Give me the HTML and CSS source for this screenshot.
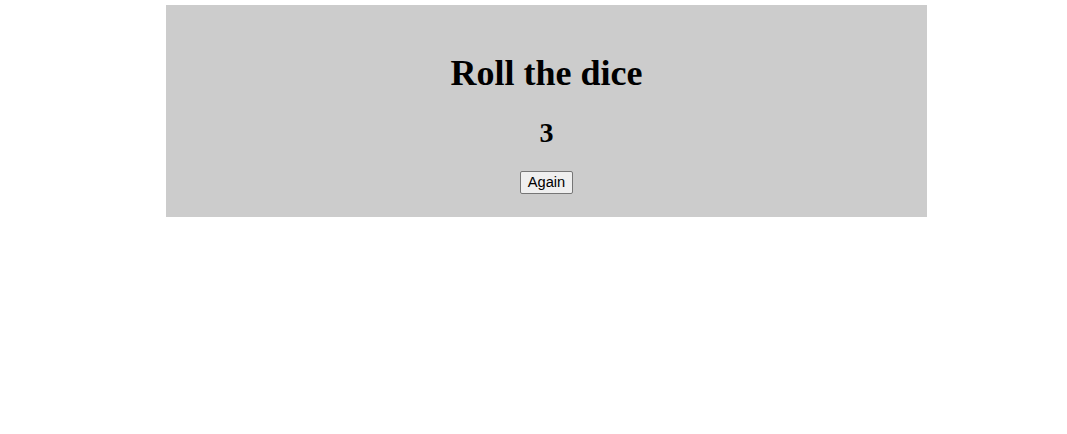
FILE: index.html
```html
<!DOCTYPE html>
<html>
<head>
<meta charset="utf-8">
<link rel="stylesheet" href="styles.css">
</head>
<body>
<div class="panel">
  <h1 class="title">Roll the dice</h1>
  <h2 class="result">3</h2>
  <button class="again">Again</button>
</div>
</body>
</html>
```
FILE: styles.css
```css
html, body {
  margin: 0;
  background: #fff;
}
body {
  padding: 5px 0 0 166px;
  font-family: "Liberation Serif", "Times New Roman", serif;
}
.panel {
  width: 761px;
  height: 212px;
  box-sizing: border-box;
  background: #cccccc;
  display: flex;
  flex-direction: column;
  align-items: center;
  padding-top: 50px;
}
.title {
  margin: 0;
  font-size: 36px;
  line-height: 1;
  font-weight: bold;
}
.result {
  margin: 28px 0 0;
  font-size: 28px;
  line-height: 1;
  font-weight: bold;
}
.again {
  margin-top: 24px;
  font-family: "Liberation Sans", Arial, sans-serif;
  font-size: 14.67px;
  line-height: 16.5px;
  padding: 2px 7px;
  border: 1px solid #767676;
  border-radius: 2px;
  background: #efefef;
  color: #000;
}
```
